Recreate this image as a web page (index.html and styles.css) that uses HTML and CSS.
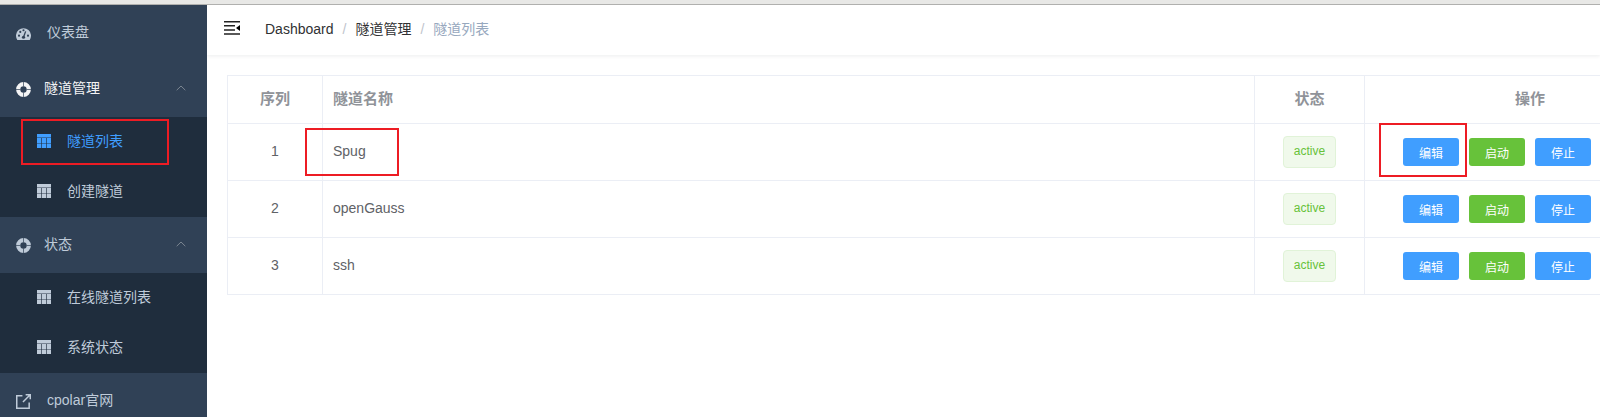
FILE: index.html
```
<!DOCTYPE html>
<html lang="zh-CN">

<head>
  <meta charset="UTF-8">
  <meta name="viewport" content="width=device-width, initial-scale=1.0">
  <title>隧道列表</title>
  <link rel="stylesheet" href="styles.css">
</head>

<body>
  <!--Shared icons-->
  <svg class="icon-defs" aria-hidden="true">
    <symbol id="icon-table" viewBox="0 0 14 14">
      <path d="M0 0h14v14H0z" />
      <path d="M0 3.5h14M0 9.500h14" stroke="#1f2d3d" stroke-opacity=".45" />
      <path d="M4.500 4v10M9.500 4v10" stroke="#1f2d3d" stroke-opacity=".65" />
    </symbol>
    <symbol id="icon-ring" viewBox="0 0 15 15">
      <circle cx="7.500" cy="7.500" r="5.300" fill="none" stroke="currentColor" stroke-width="4.200" />
      <path d="M7.500 0v4.500M7.500 10.500v4.500M0 7.500h4.500M10.500 7.500h4.500" stroke="#304156" stroke-opacity=".7" />
    </symbol>
    <symbol id="icon-arrow" viewBox="0 0 10 6">
      <path d="M.7 5.200L5 1l4.300 4.200" fill="none" stroke="currentColor" />
    </symbol>
  </svg>

  <div class="topbar"></div>
  <div class="app">
    <nav class="sidebar">
      <a class="menu-item" href="#">
        <svg class="icon" viewBox="0 0 14 14">
          <path d="M1.200 13A7 7 0 1 1 12.800 13z" />
          <g fill="#304156">
            <circle cx="2.800" cy="9" r="1" />
            <circle cx="4" cy="5.500" r="1" />
            <circle cx="7" cy="4" r="1" />
            <circle cx="11.200" cy="9" r="1" />
            <circle cx="7" cy="10.500" r="1.500" />
          </g>
          <path d="M7 10.500L9 5" stroke="#304156" stroke-width="1.200" />
        </svg>
        <span>仪表盘</span>
      </a>

      <button type="button" class="menu-title opened">
        <svg class="icon"><use href="#icon-ring" /></svg>
        <span>隧道管理</span>
        <svg class="arrow"><use href="#icon-arrow" /></svg>
      </button>
      <div class="submenu">
        <a class="submenu-item active" href="#">
          <svg class="icon"><use href="#icon-table" /></svg>
          <span>隧道列表</span>
          <i class="mark mark-menu"></i>
        </a>
        <a class="submenu-item" href="#">
          <svg class="icon"><use href="#icon-table" /></svg>
          <span>创建隧道</span>
        </a>
      </div>

      <button type="button" class="menu-title">
        <svg class="icon"><use href="#icon-ring" /></svg>
        <span>状态</span>
        <svg class="arrow"><use href="#icon-arrow" /></svg>
      </button>
      <div class="submenu">
        <a class="submenu-item" href="#">
          <svg class="icon"><use href="#icon-table" /></svg>
          <span>在线隧道列表</span>
        </a>
        <a class="submenu-item" href="#">
          <svg class="icon"><use href="#icon-table" /></svg>
          <span>系统状态</span>
        </a>
      </div>

      <a class="menu-item" href="#">
        <svg class="icon" viewBox="0 0 14 14">
          <path d="M6 1.700H.7v11.600h11.600V8M9 .7h4.300V5M13 1L6.500 7.500" fill="none" stroke="currentColor" stroke-width="1.400" />
        </svg>
        <span>cpolar官网</span>
      </a>
    </nav>

    <div class="content">
      <header class="navbar">
        <button type="button" class="hamburger" aria-label="Toggle sidebar">
          <svg viewBox="0 0 16 14" width="16" height="14">
            <path d="M0 .7h16M0 4.700h11M0 9h11M0 13h16" stroke="#222" stroke-width="1.500" />
            <path d="M16 4v6l-4-3z" />
          </svg>
        </button>
        <div class="breadcrumb">
          <a href="#">Dashboard</a>
          <span class="separator">/</span>
          <a href="#">隧道管理</a>
          <span class="separator">/</span>
          <span class="current">隧道列表</span>
        </div>
      </header>

      <main>
        <table>
          <colgroup>
            <col class="col-index">
            <col>
            <col class="col-status">
            <col class="col-actions">
          </colgroup>
          <thead>
            <tr>
              <th>序列</th>
              <th class="name">隧道名称</th>
              <th>状态</th>
              <th>操作</th>
            </tr>
          </thead>
          <tbody>
            <tr>
              <td>1</td>
              <td class="name">Spug<i class="mark mark-name"></i></td>
              <td><span class="tag">active</span></td>
              <td>
                <div class="actions">
                  <button type="button" class="btn">编辑</button>
                  <button type="button" class="btn success">启动</button>
                  <button type="button" class="btn">停止</button>
                </div>
                <i class="mark mark-edit"></i>
              </td>
            </tr>
            <tr>
              <td>2</td>
              <td class="name">openGauss</td>
              <td><span class="tag">active</span></td>
              <td>
                <div class="actions">
                  <button type="button" class="btn">编辑</button>
                  <button type="button" class="btn success">启动</button>
                  <button type="button" class="btn">停止</button>
                </div>
              </td>
            </tr>
            <tr>
              <td>3</td>
              <td class="name">ssh</td>
              <td><span class="tag">active</span></td>
              <td>
                <div class="actions">
                  <button type="button" class="btn">编辑</button>
                  <button type="button" class="btn success">启动</button>
                  <button type="button" class="btn">停止</button>
                </div>
              </td>
            </tr>
          </tbody>
        </table>
      </main>
    </div>
  </div>
</body>

</html>
```
FILE: styles.css
```
* {
  box-sizing: border-box;
}

body {
  margin: 0;
  height: 100vh;
  display: flex;
  flex-direction: column;
  overflow: hidden;
  background: #fff;
  color: #606266;
  font-family: "Liberation Sans", "Noto Sans CJK SC", sans-serif;
  font-size: 14px;
}

a {
  color: inherit;
  text-decoration: none;
}

button {
  border: 0;
  font-family: inherit;
  cursor: pointer;
}

.icon-defs {
  display: none;
}

.topbar {
  flex: none;
  height: 5px;
  background: #e8e8e6;
  border-bottom: 1px solid #b0b0ae;
}

.app {
  flex: 1;
  display: flex;
  min-height: 0;
}

/* Sidebar */
.sidebar {
  flex: none;
  width: 207px;
  overflow: hidden;
  background: #304156;
  color: #bfcbd9;
}

.menu-item,
.menu-title,
.submenu-item {
  display: flex;
  align-items: center;
  width: 100%;
  height: 56px;
  padding: 0 21px 0 16px;
  gap: 16px;
  color: inherit;
  font-size: 14px;
}

.menu-item span,
.menu-title span,
.submenu-item span {
  padding-bottom: 4px;
}

.menu-title {
  gap: 13px;
  background: none;
}

.menu-title.opened {
  color: #f4f4f5;
}

.submenu {
  background: #1f2d3d;
}

.submenu-item {
  position: relative;
  height: 50px;
  padding-left: 37px;
}

.submenu-item.active {
  color: #409eff;
}

.icon {
  flex: none;
  width: 14px;
  height: 14px;
  fill: currentColor;
}

.submenu-item .icon {
  margin-bottom: 2px;
}

.menu-item .icon,
.menu-title .icon {
  width: 15px;
  height: 15px;
}

.arrow {
  width: 10px;
  height: 6px;
  margin-bottom: 2px;
  margin-left: auto;
  color: #7b8591;
}

/* Navbar */
.content {
  flex: 1;
  min-width: 0;
  overflow: hidden;
}

.navbar {
  display: flex;
  align-items: center;
  height: 50px;
  padding: 0 17px 4px;
  gap: 25px;
  box-shadow: 0 1px 4px rgba(0, 21, 41, .08);
}

.hamburger {
  display: flex;
  padding: 0;
  background: none;
}

.breadcrumb {
  display: flex;
  align-items: baseline;
  color: #303133;
}

.separator {
  margin: 0 9px;
  color: #c0c4cc;
}

.current {
  color: #97a8be;
}

/* Table: the actions column runs past the right edge of the window */
main {
  padding: 20px 0 20px 20px;
  margin-right: -96px;
}

table {
  width: 100%;
  table-layout: fixed;
  border-collapse: collapse;
}

.col-index {
  width: 95px;
}

.col-status {
  width: 110px;
}

.col-actions {
  width: 331px;
}

th,
td {
  position: relative;
  padding: 0 10px 2px;
  border: 1px solid #ebeef5;
  text-align: center;
}

th {
  height: 48px;
  padding-bottom: 4px;
  color: #909399;
  font-size: 15px;
}

td {
  height: 57px;
}

.name {
  text-align: left;
}

.tag {
  display: inline-block;
  height: 32px;
  margin-top: 2px;
  padding: 0 10px;
  border: 1px solid #e1f3d8;
  border-radius: 4px;
  background: #f0f9eb;
  color: #67c23a;
  font-size: 12px;
  line-height: 29px;
  vertical-align: middle;
}

.actions {
  display: flex;
  gap: 10px;
  padding: 2px 0 0 28px;
}

.btn {
  width: 56px;
  height: 28px;
  padding: 0;
  border-radius: 3px;
  background: #409eff;
  color: #fff;
  font-size: 12px;
}

.btn.success {
  background: #67c23a;
}

/* Red highlight frames */
.mark {
  position: absolute;
  border: 2px solid #ed1c24;
  pointer-events: none;
}

.mark-menu {
  top: 2px;
  left: 21px;
  width: 148px;
  height: 46px;
}

.mark-name {
  z-index: 1;
  top: 4px;
  left: -18px;
  width: 94px;
  height: 48px;
}

.mark-edit {
  z-index: 1;
  top: -1px;
  left: 14px;
  width: 88px;
  height: 54px;
}
```
